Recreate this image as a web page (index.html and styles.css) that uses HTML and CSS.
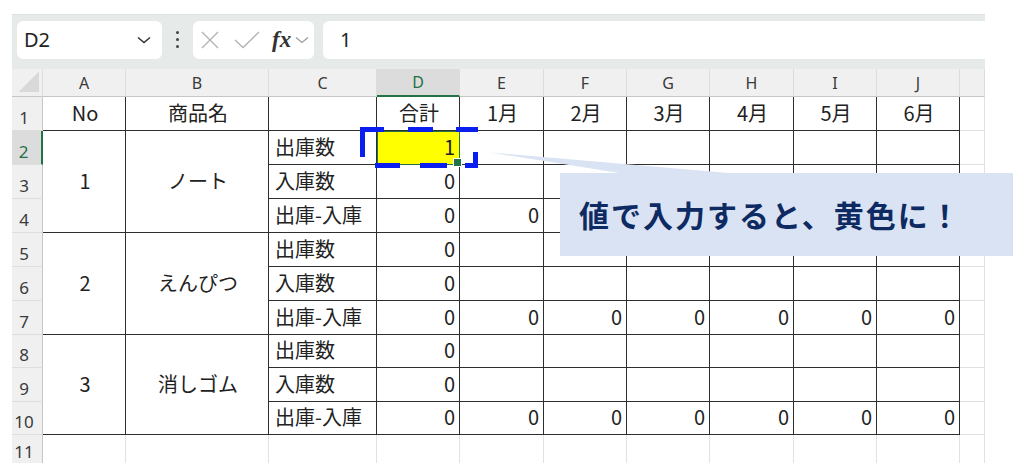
FILE: index.html
```html
<!DOCTYPE html>
<html lang="ja">
<head>
    <meta charset="UTF-8">
    <meta name="viewport" content="width=device-width, initial-scale=1.0">
    <title>在庫表</title>
    <link rel="stylesheet" href="styles.css">
</head>
<body>
<div class="page">
    <div class="app">
        <div class="toolbar">
            <div class="namebox">
                <span>D2</span>
                <svg width="14" height="8" viewBox="0 0 14 8"><path d="M1 1.5 L7 6.5 L13 1.5" fill="none" stroke="#333" stroke-width="1.5"/></svg>
            </div>
            <div class="kebab"><i></i><i></i><i></i></div>
            <div class="fxbox">
                <svg width="20" height="20" viewBox="0 0 20 20"><path d="M2 2 L18 18 M18 2 L2 18" stroke="#b4b4b4" stroke-width="1.4"/></svg>
                <svg width="26" height="18" viewBox="0 0 26 18"><path d="M1 9 L9 16.5 L25 1" fill="none" stroke="#b4b4b4" stroke-width="1.4"/></svg>
                <span class="fx">fx</span>
                <svg width="14" height="8" viewBox="0 0 14 8"><path d="M1 1.5 L7 6.5 L13 1.5" fill="none" stroke="#999" stroke-width="1.2"/></svg>
            </div>
            <div class="formula">1</div>
        </div>

        <div class="sheet">
            <div class="hd corner"></div>
            <div class="hd">A</div>
            <div class="hd">B</div>
            <div class="hd">C</div>
            <div class="hd on">D</div>
            <div class="hd">E</div>
            <div class="hd">F</div>
            <div class="hd">G</div>
            <div class="hd">H</div>
            <div class="hd">I</div>
            <div class="hd">J</div>
            <div class="hd"></div>

            <div class="rh">1</div>
            <div class="c ctr">No</div>
            <div class="c ctr">商品名</div>
            <div class="c"></div>
            <div class="c ctr">合計</div>
            <div class="c ctr">1月</div>
            <div class="c ctr">2月</div>
            <div class="c ctr">3月</div>
            <div class="c ctr">4月</div>
            <div class="c ctr">5月</div>
            <div class="c ctr">6月</div>
            <div class="x"></div>

            <div class="rh on">2</div>
            <div class="c ctr span3">1</div>
            <div class="c ctr span3">ノート</div>
            <div class="c">出庫数</div>
            <div class="c num sel">1</div>
            <div class="c"></div><div class="c"></div><div class="c"></div><div class="c"></div><div class="c"></div><div class="c"></div>
            <div class="x"></div>

            <div class="rh">3</div>
            <div class="c">入庫数</div>
            <div class="c num">0</div>
            <div class="c"></div><div class="c"></div><div class="c"></div><div class="c"></div><div class="c"></div><div class="c"></div>
            <div class="x"></div>

            <!-- F4:J4 sit under the callout -->
            <div class="rh">4</div>
            <div class="c">出庫-入庫</div>
            <div class="c num">0</div>
            <div class="c num">0</div><div class="c"></div><div class="c"></div><div class="c"></div><div class="c"></div><div class="c"></div>
            <div class="x"></div>

            <div class="rh">5</div>
            <div class="c ctr span3">2</div>
            <div class="c ctr span3">えんぴつ</div>
            <div class="c">出庫数</div>
            <div class="c num">0</div>
            <div class="c"></div><div class="c"></div><div class="c"></div><div class="c"></div><div class="c"></div><div class="c"></div>
            <div class="x"></div>

            <div class="rh">6</div>
            <div class="c">入庫数</div>
            <div class="c num">0</div>
            <div class="c"></div><div class="c"></div><div class="c"></div><div class="c"></div><div class="c"></div><div class="c"></div>
            <div class="x"></div>

            <div class="rh">7</div>
            <div class="c">出庫-入庫</div>
            <div class="c num">0</div>
            <div class="c num">0</div><div class="c num">0</div><div class="c num">0</div><div class="c num">0</div><div class="c num">0</div><div class="c num">0</div>
            <div class="x"></div>

            <div class="rh">8</div>
            <div class="c ctr span3">3</div>
            <div class="c ctr span3">消しゴム</div>
            <div class="c">出庫数</div>
            <div class="c num">0</div>
            <div class="c"></div><div class="c"></div><div class="c"></div><div class="c"></div><div class="c"></div><div class="c"></div>
            <div class="x"></div>

            <div class="rh">9</div>
            <div class="c">入庫数</div>
            <div class="c num">0</div>
            <div class="c"></div><div class="c"></div><div class="c"></div><div class="c"></div><div class="c"></div><div class="c"></div>
            <div class="x"></div>

            <div class="rh">10</div>
            <div class="c">出庫-入庫</div>
            <div class="c num">0</div>
            <div class="c num">0</div><div class="c num">0</div><div class="c num">0</div><div class="c num">0</div><div class="c num">0</div><div class="c num">0</div>
            <div class="x"></div>

            <div class="rh">11</div>
            <div class="x"></div><div class="x"></div><div class="x"></div><div class="x"></div><div class="x"></div><div class="x"></div>
            <div class="x"></div><div class="x"></div><div class="x"></div><div class="x"></div><div class="x"></div>
        </div>
    </div>

    <!-- dashed marker around D2 -->
    <svg class="marker" width="130" height="50" viewBox="355 122 130 50">
        <g fill="none" stroke="#0a1ef0" stroke-width="5">
            <path d="M362.5 157 V129.5 H384"/>
            <path d="M408 129.5 H433"/>
            <path d="M456 129.5 H478"/>
            <path d="M475.5 152 V165.5 H465"/>
            <path d="M447 165.5 H420"/>
            <path d="M400 165.5 H375"/>
        </g>
    </svg>

    <svg class="pointer" width="270" height="30" viewBox="485 148 270 30">
        <polygon points="490,152.5 752,175 632,175" fill="#dae3f3"/>
    </svg>
    <div class="callout">値で入力すると、黄色に！</div>
</div>
</body>
</html>
```

FILE: styles.css
```css
* {
    box-sizing: border-box;
}

body {
    margin: 0;
    background: #fff;
    font-family: "Noto Sans CJK JP", "Noto Sans", sans-serif;
    color: #222;
}

.page {
    position: relative;
    width: 1024px;
    height: 471px;
    overflow: hidden;
}

.app {
    margin: 14px 0 0 12px;
    width: 973px;
    height: 449px;
    overflow: hidden;
}

/* formula bar */
.toolbar {
    display: flex;
    align-items: center;
    height: 55px;
    padding: 6px 0 11px 5px;
    background: #e6eae8;
    border-top: 1px solid #dde1df;
}

.namebox {
    display: flex;
    align-items: center;
    justify-content: space-between;
    width: 145px;
    height: 38px;
    padding: 0 11px 0 7px;
    background: #fff;
    border-radius: 6px;
    font-family: "Noto Sans", sans-serif;
    font-size: 20px;
    color: #222;
}

.kebab {
    display: flex;
    flex-direction: column;
    align-items: center;
    gap: 4px;
    width: 31px;
}

.kebab i {
    width: 3px;
    height: 3px;
    border-radius: 50%;
    background: #444;
}

.fxbox {
    display: flex;
    align-items: center;
    width: 121px;
    height: 38px;
    padding: 0 0 0 7px;
    background: #fff;
    border-radius: 6px;
}

.fxbox svg:nth-child(2) {
    margin-left: 14px;
}

.fx {
    margin-left: 12px;
    font-family: "Liberation Serif", serif;
    font-style: italic;
    font-weight: bold;
    font-size: 23px;
    color: #333;
    line-height: 1;
}

.fxbox svg:last-child {
    margin-left: 4px;
}

.formula {
    flex: 1;
    height: 38px;
    margin-left: 9px;
    padding-left: 17px;
    display: flex;
    align-items: center;
    background: #fff;
    border-radius: 6px 0 0 6px;
    font-family: "Noto Sans", sans-serif;
    font-size: 20px;
    color: #222;
}

/* grid */
.sheet {
    display: grid;
    grid-template-columns: 31px 83px 143px 108px 83px 84px 83px 83px 84px 83px 83px 25px;
    grid-template-rows: 28px 34px 34px 34px 34px 34px 34px 34px 33px 34px 33px 30px;
}

.sheet > div {
    display: flex;
    align-items: center;
    white-space: nowrap;
    font-size: 20px;
    line-height: 1;
}

.hd {
    justify-content: center;
    background: #f0f0f0;
    border-right: 1px solid #dcdcdc;
    border-bottom: 1px solid #c6c6c6;
    font-family: "Noto Sans", sans-serif;
    font-size: 16px !important;
    color: #3a3a3a;
}

.hd.corner {
    background: #f0f0f0 linear-gradient(to bottom right, transparent 50%, #d9d9d9 50%) no-repeat right 3px bottom 4px / 20px 20px;
}

.rh {
    justify-content: center;
    align-items: flex-end !important;
    padding: 0 6px 4px 0;
    background: #f0f0f0;
    border-right: 1px solid #c6c6c6;
    border-bottom: 1px solid #dedede;
    font-family: "Noto Sans", sans-serif;
    font-size: 17px !important;
    color: #3a3a3a;
}

.hd.on,
.rh.on {
    background: #dcdcdc;
    color: #1e7145;
}

.hd.on {
    border-bottom: 2px solid #217346;
}

.rh.on {
    border-right: 2px solid #217346;
}

.c {
    padding: 0 4px 2px 6px;
    border-right: 1px solid #2e2e2e;
    border-bottom: 1px solid #2e2e2e;
}

.x {
    border-right: 1px solid #e1e1e1;
    border-bottom: 1px solid #e1e1e1;
}

.ctr {
    justify-content: center;
}

.num {
    justify-content: flex-end;
}

.span3 {
    grid-row: span 3;
}

.c.sel {
    position: relative;
    background: #ffff00;
    outline: 1px solid #217346;
    outline-offset: -1px;
}

.c.sel::after {
    content: "";
    position: absolute;
    right: -3px;
    bottom: -3px;
    width: 7px;
    height: 7px;
    background: #217346;
    border: 1px solid #fff;
}

/* overlays */
.marker {
    position: absolute;
    left: 355px;
    top: 122px;
}

.pointer {
    position: absolute;
    left: 485px;
    top: 148px;
}

.callout {
    position: absolute;
    left: 560px;
    top: 173px;
    width: 453px;
    height: 83px;
    padding-left: 19px;
    background: #dae3f3;
    font-family: "Noto Sans CJK JP", sans-serif;
    font-weight: bold;
    font-size: 30px;
    letter-spacing: 2px;
    line-height: 83px;
    color: #0e2a62;
}
```
